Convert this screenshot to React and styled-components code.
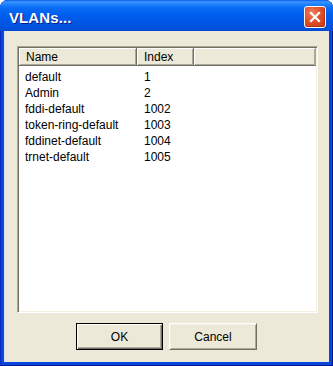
import React from "react";
import styled, { createGlobalStyle } from "styled-components";

const beige = "#ece9d8";
const uiFont = `"Liberation Sans", Arial, sans-serif`;

const GlobalStyle = createGlobalStyle`
    html, body {
        margin: 0;
        padding: 0;
        background: #ffffff;
    }
    * {
        box-sizing: border-box;
    }
`;

const Window = styled.div`
    width: 333px;
    height: 366px;
    display: flex;
    flex-direction: column;
    border-radius: 8px 8px 0 0;
    overflow: hidden;
    background: #0846dc;
    box-shadow: inset 1px 0 #0a2bc0, inset -1px 0 #001694, inset 0 -1px #001694;
    font-family: ${uiFont};
`;

const TitleBar = styled.div`
    height: 31px;
    flex: 0 0 auto;
    display: flex;
    align-items: center;
    justify-content: space-between;
    padding: 3px 7px 0 9px;
    background: linear-gradient(
        to bottom,
        #0a5fe8 0px,
        #3d95ff 2px,
        #1f83ff 4px,
        #0a6cf5 8px,
        #0060ef 14px,
        #0058e8 20px,
        #0054e0 26px,
        #004bd4 31px
    );
`;

const Title = styled.span`
    color: #ffffff;
    font-size: 15px;
    font-weight: bold;
    margin-top: 1px;
    text-shadow: 1px 1px #0a1a8a;
    letter-spacing: 0.1px;
`;

const CloseButton = styled.div`
    width: 22px;
    height: 22px;
    border: 1px solid #ffffff;
    border-radius: 3px;
    display: flex;
    align-items: center;
    justify-content: center;
    background: radial-gradient(circle at 35% 30%, #f08060 0%, #e0502a 45%, #c83a14 100%);
    box-shadow: inset -1px -1px #b03010;
`;

const Client = styled.div`
    flex: 1;
    margin: 0 4px 4px;
    background: ${beige};
    display: flex;
    flex-direction: column;
    padding: 15px 11px 12px 13px;
    box-shadow: inset 1px 0 #d8e4f8;
`;

const ListBox = styled.div`
    height: 267px;
    flex: 0 0 auto;
    background: #ffffff;
    border-style: solid;
    border-width: 1px;
    border-color: #aca899 #ffffff #ffffff #aca899;
    box-shadow: inset 1px 1px #716f64, inset -1px -1px #f1efe2;
    padding: 1px;
    display: flex;
    flex-direction: column;
    font-size: 12px;
    color: #000000;
`;

const HeaderRow = styled.div`
    display: flex;
    height: 18px;
    flex: 0 0 auto;
    background: ${beige};
`;

const HeaderCell = styled.div`
    width: ${props => props.width ? `${props.width}px` : "auto"};
    flex: ${props => props.width ? "0 0 auto" : "1"};
    height: 100%;
    padding-left: 7px;
    display: flex;
    align-items: center;
    border-right: 1px solid ${props => props.width ? "#716f64" : "#aca899"};
    border-bottom: 1px solid #716f64;
    box-shadow: inset 1px 1px #ffffff, inset -1px -1px #aca899;
    white-space: nowrap;
`;

const Rows = styled.div`
    padding-top: 3px;
    display: flex;
    flex-direction: column;
`;

const Row = styled.div`
    display: flex;
    height: 16px;
    align-items: center;
`;

const Cell = styled.div`
    width: ${props => props.width}px;
    padding-left: ${props => props.pad}px;
    white-space: nowrap;
`;

const ButtonBar = styled.div`
    margin-top: 10px;
    display: flex;
    justify-content: center;
    gap: 6px;
    padding-left: 0;
    margin-left: -2px;
`;

const Button = styled.div`
    width: ${props => props.width}px;
    height: 27px;
    display: flex;
    align-items: center;
    justify-content: center;
    font-size: 12px;
    color: #000000;
    background: ${beige};
    border: 1px solid ${props => props.primary ? "#000000" : beige};
    border-color: ${props => props.primary
        ? "#000000"
        : "#ffffff #716f64 #716f64 #ffffff"};
    box-shadow: ${props => props.primary
        ? "inset 1px 1px #ffffff, inset -1px -1px #716f64, inset -2px -2px #aca899"
        : "inset 1px 1px #f1efe2, inset -1px -1px #aca899"};
`;

const vlans = [
    ["default", "1"],
    ["Admin", "2"],
    ["fddi-default", "1002"],
    ["token-ring-default", "1003"],
    ["fddinet-default", "1004"],
    ["trnet-default", "1005"],
];

const CloseIcon = () => (
    <svg width="12" height="12" viewBox="0 0 12 12">
        <path d="M2 2 L10 10 M10 2 L2 10" stroke="#ffffff" strokeWidth="2.2" strokeLinecap="square" />
    </svg>
);

export default function App() {
    return (
        <>
            <GlobalStyle />
            <Window>
                <TitleBar>
                    <Title>VLANs...</Title>
                    <CloseButton>
                        <CloseIcon />
                    </CloseButton>
                </TitleBar>
                <Client>
                    <ListBox>
                        <HeaderRow>
                            <HeaderCell width={118}>Name</HeaderCell>
                            <HeaderCell width={57}>Index</HeaderCell>
                            <HeaderCell />
                        </HeaderRow>
                        <Rows>
                            {vlans.map(([name, index]) => (
                                <Row key={name}>
                                    <Cell width={119} pad={6}>{name}</Cell>
                                    <Cell width={60} pad={6}>{index}</Cell>
                                </Row>
                            ))}
                        </Rows>
                    </ListBox>
                    <ButtonBar>
                        <Button primary width={87}>OK</Button>
                        <Button width={88}>Cancel</Button>
                    </ButtonBar>
                </Client>
            </Window>
        </>
    );
}
